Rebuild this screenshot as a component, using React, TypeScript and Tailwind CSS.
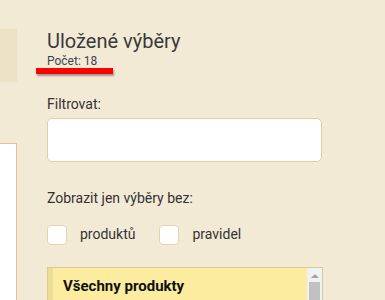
import React from "react";

function Checkbox({ label }: { label: string }) {
  return (
    <label className="flex items-center gap-[13px]">
      <span className="block w-[20px] h-[20px] rounded-[4px] bg-white border border-[#e4d5a8]" />
      <span className="text-[14px] text-[#333]">{label}</span>
    </label>
  );
}

export default function App() {
  return (
    <div
      className="relative flex w-[385px] h-[300px] overflow-hidden bg-[#f3ead6]"
      style={{ fontFamily: "Roboto, 'Liberation Sans', sans-serif" }}
    >
      <aside className="flex flex-col w-[17px] shrink-0 pt-[29px]">
        <div className="relative h-[53px] shrink-0 bg-[#ede1c6]">
          <span className="absolute left-[-3px] top-[22px] w-[2px] h-[6px] bg-[#555]" />
        </div>
        <div className="mt-[61px] flex-1 bg-white border-t border-r border-[#dcc58f]" />
      </aside>

      <main className="block pl-[30px] pt-[28px] w-[305px]">
        <h1 className="text-[20px] leading-[26px] text-[#3a3a3a]">Uložené výběry</h1>
        <div className="relative text-[12px] leading-[14px] text-[#3f4550]">
          Počet: 18
          <span className="absolute left-[-11px] top-[14px] w-[77px] h-[6px] bg-[#ff0000] shadow-[1px_2px_2px_rgba(0,0,0,0.35)]" />
        </div>

        <div className="mt-[27px] text-[14px] leading-[18px] text-[#333]">Filtrovat:</div>
        <div className="mt-[5px] h-[44px] w-[275px] rounded-[5px] bg-white border border-[#e0cf9f]" />

        <div className="mt-[27px] text-[14px] leading-[18px] text-[#333]">Zobrazit jen výběry bez:</div>
        <div className="mt-[17px] flex gap-[24px]">
          <Checkbox label="produktů" />
          <Checkbox label="pravidel" />
        </div>

        <div className="mt-[22px] flex w-[276px] h-[60px] border border-[#dcc993] bg-[#fbec9f]">
          <div className="w-[5px] bg-[#eddc94]" />
          <div className="flex-1 pl-[10px] pt-[9px]">
            <div className="text-[15px] leading-[18px] font-bold text-[#111]">Všechny produkty</div>
            <div className="mt-[4px] text-[12px] leading-[14px] text-[#666]">Počet: 1 248</div>
          </div>
          <div className="flex flex-col items-center w-[15px] bg-[#f1f1f1]">
            <span className="mt-[6px] w-0 h-0 border-l-[4px] border-r-[4px] border-b-[4px] border-l-transparent border-r-transparent border-b-[#a3a3a3]" />
            <span className="mt-[4px] w-[11px] flex-1 bg-[#c1c1c1]" />
          </div>
        </div>
      </main>
    </div>
  );
}
